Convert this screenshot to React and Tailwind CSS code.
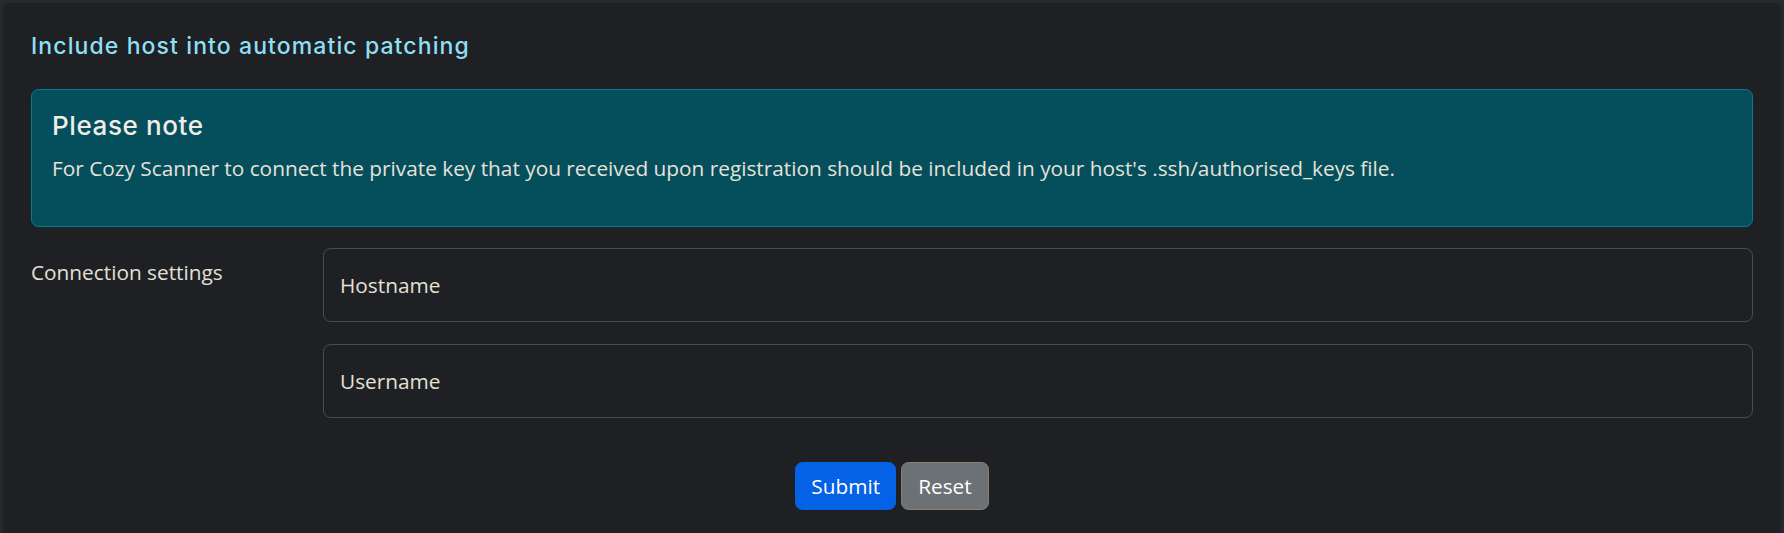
export default function App() {
  return (
    <div className="min-h-[533px] bg-[#25282d] pl-[3px] pt-[3px] pr-[3px]">
      <div className="min-h-[530px] rounded-tl-[6px] rounded-tr-[6px] bg-[#1f2023] px-[28px] pt-[29px] font-['Open_Sans',sans-serif] text-[#e3e0d8]">
        <h5 className="font-['Inter',sans-serif] text-[23px] font-medium leading-[28px] tracking-[1.1px] text-[#8fdff4]">
          Include host into automatic patching
        </h5>

        <div className="mt-[29px] rounded-[7.5px] border border-[#0a7b92] bg-[#054f5c] px-[20px] pt-[20px] pb-[42px]">
          <h4 className="mb-[11px] font-['Inter',sans-serif] text-[26px] font-medium leading-[32px] tracking-[0.6px] text-[#f1ede6]">
            Please note
          </h4>
          <p className="text-[20.8px] leading-[31px] text-[#e6e2da]">
            For Cozy Scanner to connect the private key that you received upon registration should be included in your host's .ssh/authorised_keys file.
          </p>
        </div>

        <div className="mt-[21px] flex">
          <label className="w-[292px] shrink-0 pt-[9px] text-[20.8px] leading-[31px]">
            Connection settings
          </label>
          <div className="flex flex-1 flex-col gap-[22px]">
            <input
              placeholder="Hostname"
              className="h-[74px] rounded-[7.5px] border border-[#4a4d52] bg-transparent px-[16px] text-[20.8px] text-[#e3e0d8] placeholder:text-[#e3e0d8] outline-none"
            />
            <input
              placeholder="Username"
              className="h-[74px] rounded-[7.5px] border border-[#4a4d52] bg-transparent px-[16px] text-[20.8px] text-[#e3e0d8] placeholder:text-[#e3e0d8] outline-none"
            />
          </div>
        </div>

        <div className="mt-[44px] flex justify-center gap-[5px]">
          <button className="h-[48px] rounded-[7.5px] border border-[#0561e6] bg-[#0561e6] px-[15px] text-[20.8px] leading-[30px] text-white">
            Submit
          </button>
          <button className="h-[48px] rounded-[7.5px] border border-[#8a8070] bg-[#6c7175] px-[16px] text-[20.8px] leading-[30px] text-white">
            Reset
          </button>
        </div>
      </div>
    </div>
  );
}
